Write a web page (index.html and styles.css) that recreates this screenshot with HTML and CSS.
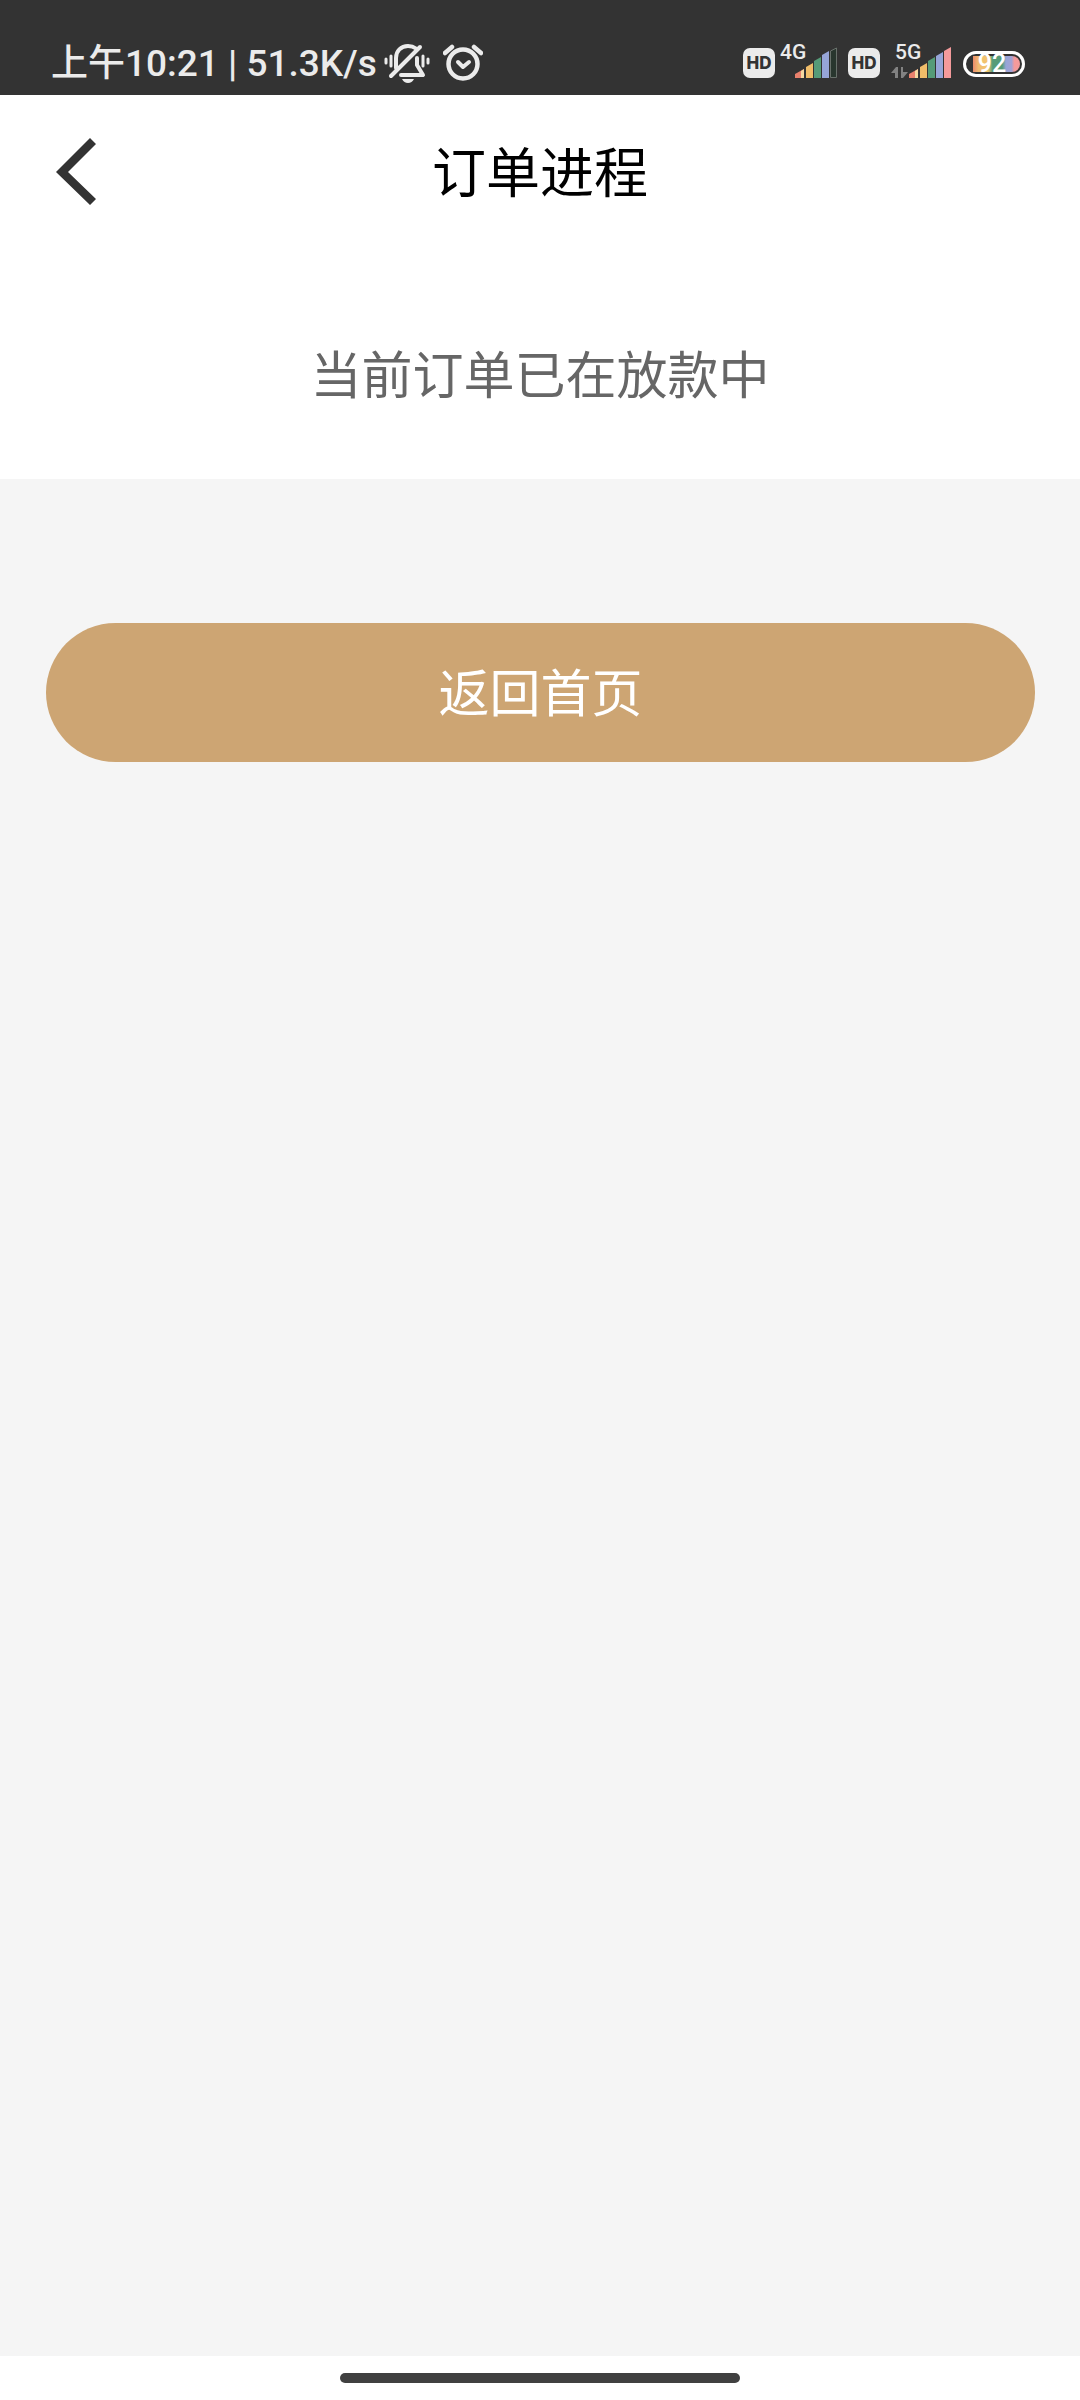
FILE: index.html
```html
<!DOCTYPE html>
<html lang="zh-CN">
<head>
<meta charset="utf-8">
<meta name="viewport" content="width=device-width, initial-scale=1">
<title>订单进程</title>
<link rel="stylesheet" href="styles.css">
</head>
<body>
<div class="status-bar">
  <div class="status-left">
    <span class="status-text">上午10:21 | 51.3K/s</span>
    <svg class="icon-bell" viewBox="0 0 46 40" width="46" height="40" fill="none" stroke="#ebebeb" stroke-linecap="round" aria-hidden="true">
      <path d="M2 16v4M7 13v10M39 13v10M44 16v4" stroke-width="3"/>
      <path d="M12 25V15C12 8 17 3 24 3c3 0 6 1 8 2.500" stroke-width="4"/>
      <path d="M33 15v7l6 10H17" stroke-width="4" stroke-linejoin="round"/>
      <path d="M7 33L36 4" stroke-width="4"/>
      <path d="M18 36h12q-2 4-6 4t-6-4z" fill="#ebebeb" stroke="none"/>
    </svg>
    <svg class="icon-alarm" viewBox="0 0 40 40" width="40" height="40" fill="none" stroke="#ebebeb" stroke-linecap="round" stroke-linejoin="round" aria-hidden="true">
      <circle cx="20" cy="21" r="14.500" stroke-width="4.500"/>
      <path d="M2 10l7-6M38 10l-7-6" stroke-width="4.500"/>
      <path d="M15 19l5 5 6-5" stroke-width="4"/>
    </svg>
  </div>
  <div class="status-right">
    <span class="hd">HD</span>
    <svg class="signal" viewBox="0 0 60 40" width="60" height="40" aria-label="4G">
      <text class="net" x="0" y="19">4G</text>
      <path d="M15 38v-4l9-5v9z" fill="#e8806c"/>
      <path d="M21 31l3-2v9h-3z" fill="#f5d8a0"/>
      <path d="M26 38V27l7-4v15z" fill="#f0bd69"/>
      <path d="M34 38V21l7-4v21z" fill="#559b78"/>
      <path d="M42 38V15l7-4v27z" fill="#96a5d8"/>
      <path d="M50.500 37.500V11l6-3v29.500z" fill="#28362e" stroke="#68706b"/>
    </svg>
    <span class="hd hd-second">HD</span>
    <svg class="signal signal-second" viewBox="0 0 64 40" width="64" height="40" aria-label="5G">
      <text class="net" x="4" y="19">5G</text>
      <path d="M0 33l5-6h2v11H4v-5zM10 27h2v5h5l-5 6h-2z" fill="#828282"/>
      <path d="M18 38v-4l9-5v9z" fill="#e8806c"/>
      <path d="M24 31l3-2v9h-3z" fill="#f5d8a0"/>
      <path d="M29 38V27l7-4v15z" fill="#f0bd69"/>
      <path d="M37 38V21l7-4v21z" fill="#559b78"/>
      <path d="M45 38V16l7-4v26z" fill="#96a5d8"/>
      <path d="M53 38V11l7-4v31z" fill="#f49a9b"/>
    </svg>
    <svg class="battery" viewBox="0 -5 62 36" width="62" height="36" aria-label="92%">
      <defs>
        <linearGradient id="charge">
          <stop offset="0" stop-color="#eb8b6c"/><stop offset=".12" stop-color="#f1bd72"/>
          <stop offset=".32" stop-color="#f3c66c"/><stop offset=".42" stop-color="#559b78"/>
          <stop offset=".62" stop-color="#559b78"/><stop offset=".7" stop-color="#96a5d8"/>
          <stop offset=".82" stop-color="#a3a2d4"/><stop offset=".88" stop-color="#f49a9b"/>
          <stop offset="1" stop-color="#f49a9b"/>
        </linearGradient>
      </defs>
      <rect x="1.500" y="1.500" width="59" height="23" rx="11.500" fill="none" stroke="#fff" stroke-width="3"/>
      <path d="M10 5h39a8 8 0 0 1 0 16H10z" fill="url(#charge)"/>
      <text class="level" x="29" y="21" text-anchor="middle">92</text>
    </svg>
  </div>
</div>
<header class="nav">
  <button class="back" type="button" aria-label="返回">
    <svg viewBox="0 0 40 68" width="40" height="68" aria-hidden="true">
      <path d="M34 0l6 6-28 28 28 27-6 6L0 34z" fill="#333"/>
    </svg>
  </button>
  <h1 class="title">订单进程</h1>
</header>
<p class="message">当前订单已在放款中</p>
<main class="content">
  <button class="home-button" type="button">返回首页</button>
</main>
<footer class="gesture-area"><div class="gesture-bar"></div></footer>
</body>
</html>
```
FILE: styles.css
```css
* { box-sizing: border-box; }

body {
  display: flex;
  flex-direction: column;
  min-height: 100vh;
  margin: 0;
  background: #fff;
  font-family: "Noto Sans CJK SC", sans-serif;
}

.status-bar {
  display: flex;
  justify-content: space-between;
  padding: 40px 55px 0 51px;
  height: 95px;
  background: #333;
  color: #ebebeb;
}

.status-left,
.status-right {
  display: flex;
  align-items: flex-start;
}

.status-text {
  font: 500 37px/48px Roboto, "Noto Sans CJK SC", sans-serif;
  white-space: nowrap;
}

.icon-bell { margin: 3px 0 0 7px; }
.icon-alarm { margin: 3px 0 0 13px; }

.hd {
  width: 32px;
  margin: 8px 5px 0 0;
  border-radius: 7px;
  background: #ebebeb;
  color: #333;
  font: 800 17px/30px Inter, sans-serif;
  text-align: center;
}

.hd-second { margin-left: 8px; margin-right: 11px; }

.net { font: 500 21px Roboto, sans-serif; fill: #ebebeb; }

.battery { margin: 6px 0 0 8px; }

.level { font: 500 25px Roboto, sans-serif; fill: #fff; }

.nav {
  display: grid;
  grid-template-columns: 1fr auto 1fr;
  align-items: center;
  height: 154px;
}

.back {
  display: flex;
  justify-self: start;
  padding: 0 56px;
  border: 0;
  background: none;
}

.back svg { width: 40px; height: 68px; }

.title {
  margin: 0;
  padding-bottom: 4px;
  color: #000;
  font-size: 54px;
  font-weight: 400;
  line-height: 80px;
}

.message {
  margin: 0;
  padding: 83px 40px 67px;
  color: #666;
  font-size: 51px;
  line-height: 80px;
  text-align: center;
}

.content {
  flex: 1;
  padding: 144px 45px 144px 46px;
  background: #f5f5f5;
}

.home-button {
  display: block;
  width: 100%;
  padding: 27px 0 32px;
  border: 0;
  border-radius: 70px;
  background: #cda573;
  color: #fff;
  font: 400 51px/80px "Noto Sans CJK SC", sans-serif;
}

.gesture-area {
  padding: 17px 0;
  background: #fff;
}

.gesture-bar {
  width: 37%;
  height: 10px;
  margin: 0 auto;
  border-radius: 5px;
  background: #404040;
}
```
